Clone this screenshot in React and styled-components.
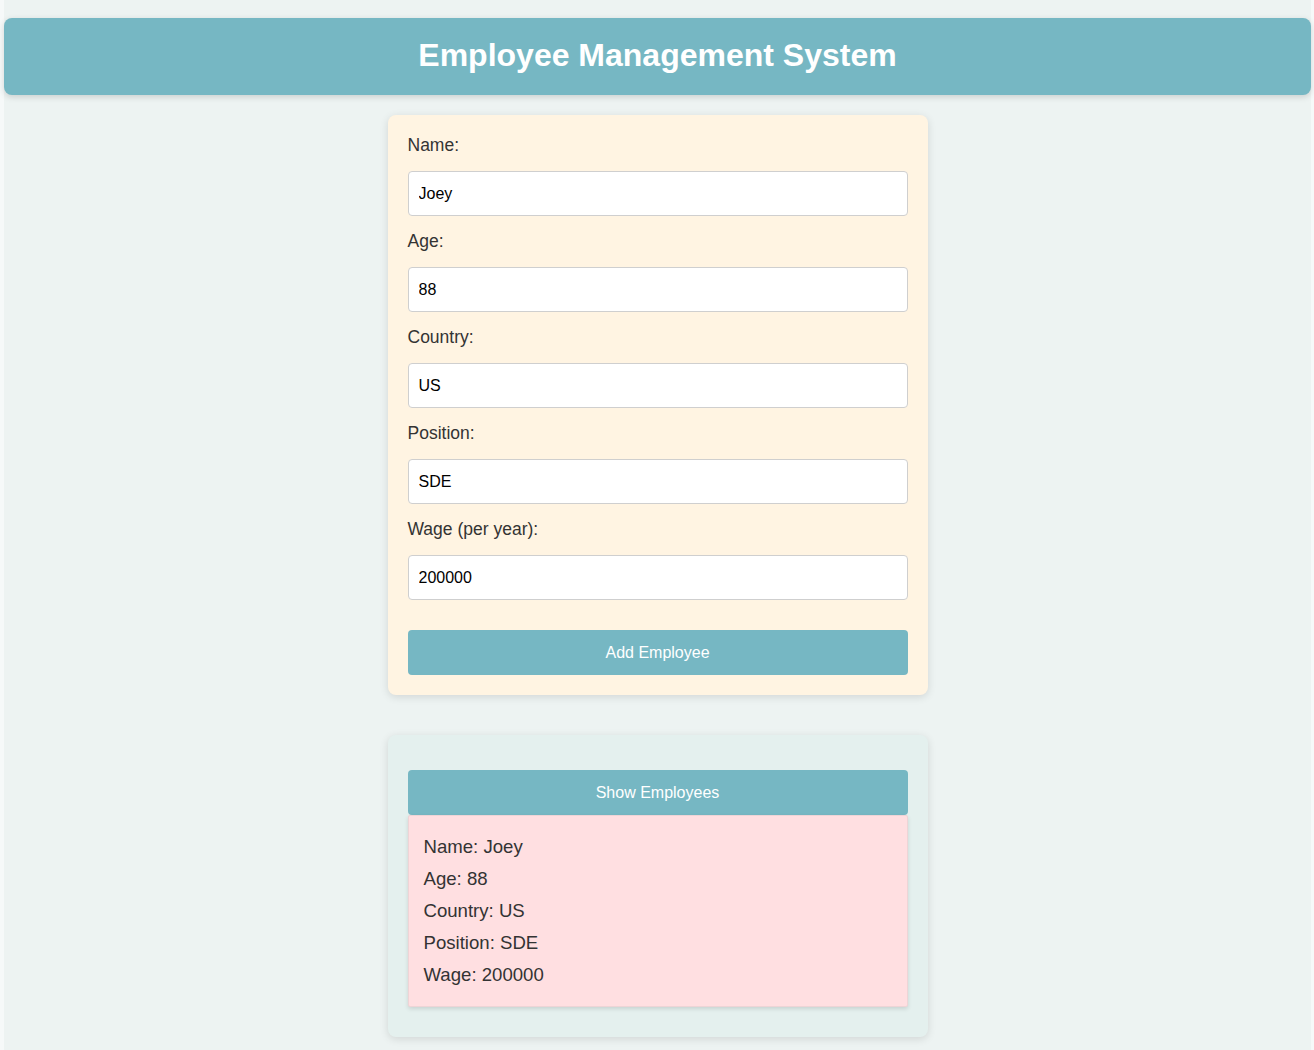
import { useState } from "react";
import styled, { createGlobalStyle } from "styled-components";

const GlobalStyle = createGlobalStyle`
  html, body {
    margin: 0;
    padding: 0;
    background: #f6f9f9;
    font-family: "Liberation Sans", Arial, Helvetica, sans-serif;
  }
  * {
    box-sizing: border-box;
  }
`;

const App = () => {
  const [employee] = useState({
    name: "Joey",
    age: "88",
    country: "US",
    position: "SDE",
    wage: "200000",
  });

  const fields = [
    { label: "Name:", value: employee.name },
    { label: "Age:", value: employee.age },
    { label: "Country:", value: employee.country },
    { label: "Position:", value: employee.position },
    { label: "Wage (per year):", value: employee.wage },
  ];

  return (
    <Page>
      <GlobalStyle />
      <Header>
        <h1>Employee Management System</h1>
      </Header>
      <FormCard>
        {fields.map((field) => (
          <Field key={field.label}>
            <Label>{field.label}</Label>
            <Input type="text" defaultValue={field.value} />
          </Field>
        ))}
        <Button $spaced>Add Employee</Button>
      </FormCard>

      <ListCard>
        <Button>Show Employees</Button>
        <EmployeeBox>
          <p>Name: {employee.name}</p>
          <p>Age: {employee.age}</p>
          <p>Country: {employee.country}</p>
          <p>Position: {employee.position}</p>
          <p>Wage: {employee.wage}</p>
        </EmployeeBox>
      </ListCard>
    </Page>
  );
};

const Page = styled.div`
  margin: 0 3px 0 4px;
  padding: 18px 0 40px;
  background: #edf3f2;
  min-height: 1050px;
  display: flex;
  flex-direction: column;
  align-items: center;
`;

const Header = styled.header`
  align-self: stretch;
  height: 77px;
  padding-bottom: 2px;
  background: #76b7c3;
  border-radius: 8px;
  box-shadow: 0 2px 6px rgba(0, 0, 0, 0.15);
  display: flex;
  align-items: center;
  justify-content: center;
  h1 {
    margin: 0;
    color: #ffffff;
    font-size: 32px;
    font-weight: bold;
  }
`;

const FormCard = styled.div`
  width: 540px;
  margin-top: 20px;
  padding: 20px;
  background: #fff4e2;
  border-radius: 8px;
  box-shadow: 0 2px 8px rgba(0, 0, 0, 0.12);
`;

const Field = styled.div`
  display: flex;
  flex-direction: column;
`;

const Label = styled.label`
  display: block;
  font-size: 17.5px;
  line-height: 20px;
  color: #333;
  margin-bottom: 16px;
`;

const Input = styled.input`
  height: 45px;
  width: 100%;
  margin-bottom: 15px;
  padding: 0 10px;
  border: 1px solid #cfcfcf;
  border-radius: 4px;
  background: #ffffff;
  font-family: "Liberation Sans", Arial, sans-serif;
  font-size: 16px;
  color: #000;
  outline: none;
`;

const Button = styled.button`
  display: block;
  width: 100%;
  height: 45px;
  margin-top: ${(props) => (props.$spaced ? "15px" : "0")};
  border: none;
  border-radius: 4px;
  background: #76b7c3;
  color: #ffffff;
  font-family: "Liberation Sans", Arial, sans-serif;
  font-size: 16px;
  cursor: pointer;
`;

const ListCard = styled.div`
  width: 540px;
  margin-top: 40px;
  padding: 35px 20px 30px;
  background: #e4f0ee;
  border-radius: 8px;
  box-shadow: 0 2px 8px rgba(0, 0, 0, 0.12);
`;

const EmployeeBox = styled.div`
  padding: 15px 15px 15px;
  background: #ffdfe1;
  border: 1px solid #eed4d6;
  border-radius: 2px;
  box-shadow: 0 2px 4px rgba(0, 0, 0, 0.12);
  p {
    margin: 0;
    font-size: 18.6px;
    line-height: 32px;
    color: #333;
  }
`;

export default App;
